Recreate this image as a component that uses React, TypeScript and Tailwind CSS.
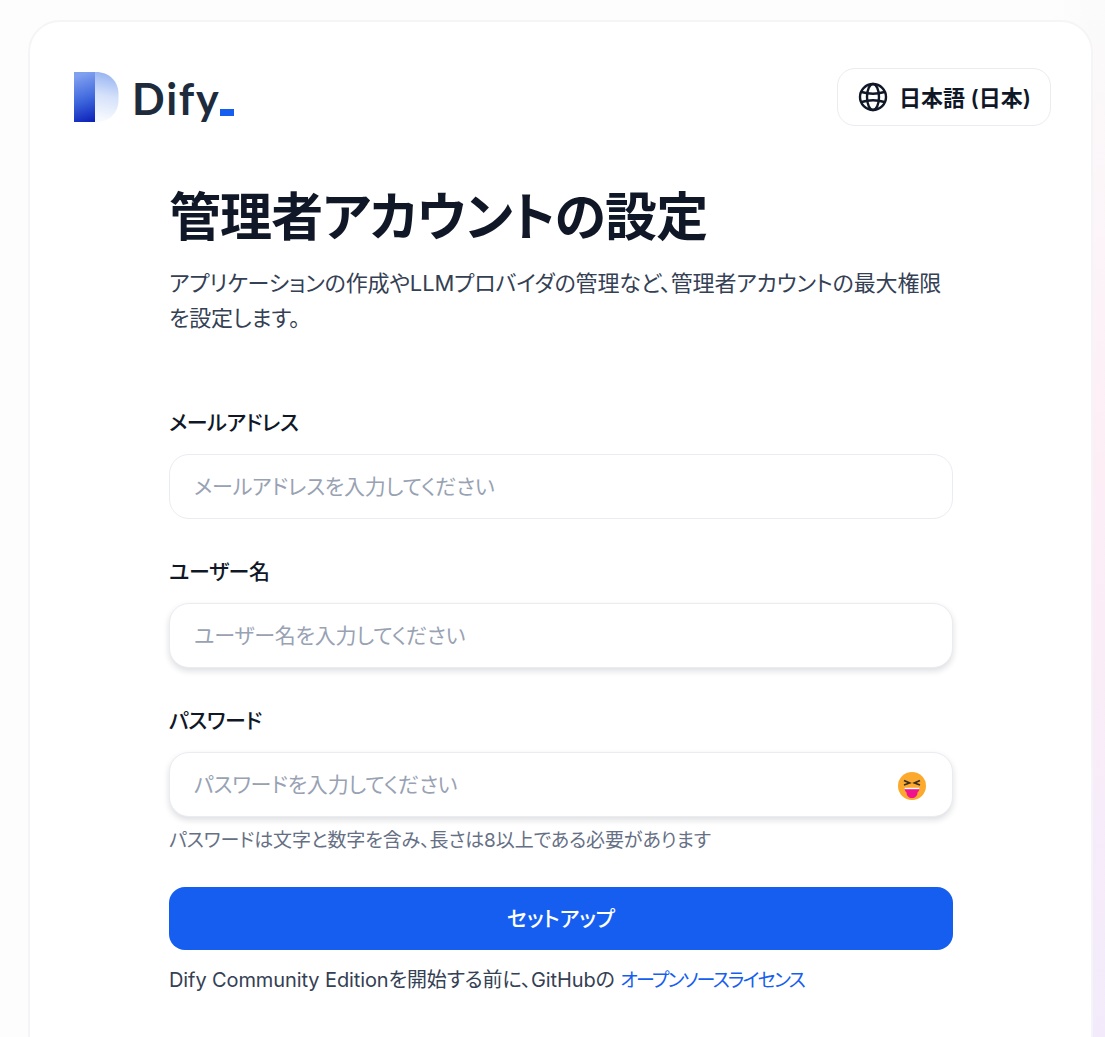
const jp = "font-['Inter','Noto_Sans_CJK_JP','Noto_Sans',sans-serif] [font-feature-settings:'palt']";

function Logo() {
  return (
    <div className="flex items-end">
      <svg width="46" height="50" viewBox="0 0 46 50" className="mr-[13px] block">
        <defs>
          <linearGradient id="dl" x1="20" y1="50" x2="4" y2="4" gradientUnits="userSpaceOnUse">
            <stop offset="0" stopColor="#0a1fb8" />
            <stop offset="0.5" stopColor="#3f68dd" />
            <stop offset="1" stopColor="#7f9fef" />
          </linearGradient>
          <linearGradient id="dr" x1="24" y1="46" x2="34" y2="0" gradientUnits="userSpaceOnUse">
            <stop offset="0" stopColor="#f6f9fe" />
            <stop offset="0.5" stopColor="#d5e1fa" />
            <stop offset="1" stopColor="#94b2f1" />
          </linearGradient>
        </defs>
        <path d="M21 0H22C35 0 44.500 9 44.500 22V28C44.500 41 35 50 22 50H21Z" fill="url(#dr)" />
        <rect x="0" y="0" width="21" height="50" fill="url(#dl)" />
      </svg>
      <div className="relative h-[50px] w-[102px]">
        <span className="absolute left-[-1px] top-[2px] font-['Lato',sans-serif] text-[43px] font-bold leading-[50px] tracking-[1.800px] text-[#1d2b3d]">Dify</span>
        <span className="absolute bottom-[6px] left-[87px] h-[7px] w-[14px] bg-[#155eef]" />
      </div>
    </div>
  );
}

function Globe() {
  return (
    <svg width="30" height="30" viewBox="0 0 30 30" fill="none" stroke="#101828" strokeWidth="2.400">
      <circle cx="15" cy="15" r="13" />
      <ellipse cx="15" cy="15" rx="6" ry="13" />
      <path d="M3.500 10Q15 13.500 26.500 10M3.500 20Q15 16.500 26.500 20" />
    </svg>
  );
}

function Emoji() {
  return (
    <svg width="30" height="30" viewBox="0 0 30 30" className="mt-[2px] block">
      <circle cx="15" cy="15" r="14" fill="#fcaa2e" />
      <path d="M7 9.500L12.500 12L7 14M23 9.500L17.500 12L23 14" fill="none" stroke="#3a2f2a" strokeWidth="1.800" />
      <path d="M7.500 17H22.500C22.500 19 21.500 20.500 20.500 21.500C20.500 25 18 27 15 27C12 27 9.500 25 9.500 21.500C8.500 20.500 7.500 19 7.500 17Z" fill="#f0148c" />
      <path d="M7.500 17.500H22.500" stroke="#ffffff" strokeWidth="1.400" />
    </svg>
  );
}

function Field({ label, placeholder, shadow, children, gap }: { label: string; placeholder: string; shadow?: boolean; children?: React.ReactNode; gap?: string }) {
  return (
    <div className={gap}>
      <div className="h-[26px] text-[21px] font-medium leading-[26px] tracking-[-0.400px] text-[#101828]">{label}</div>
      <div className={`mt-[18px] flex h-[65px] items-center justify-between rounded-[20px] border border-[#eaecf0] bg-white pl-[24px] pr-[25px] ${shadow ? "shadow-[0_3px_6px_rgba(16,24,40,0.14)]" : ""}`}>
        <span className="text-[21px] leading-[30px] tracking-[-0.200px] text-[#98a2b3]">{placeholder}</span>
        {children}
      </div>
    </div>
  );
}

export default function App() {
  return (
    <div className={`${jp} h-[1037px] overflow-hidden bg-[linear-gradient(to_right,#fdfdfd_95%,transparent_99%),linear-gradient(to_bottom,#fbfbfb,#fdeef6_45%,#f3ebfb)] pl-[28px] pr-[12px] pt-[20px]`}>
      <div className="h-[1100px] rounded-[32px] border-2 border-[#f5f5f7] bg-white">
        <div className="flex items-start justify-between pl-[44px] pr-[40px] pt-[46px]">
          <div className="mt-[4px]"><Logo /></div>
          <div className="flex h-[58px] w-[214px] items-center gap-[11px] rounded-[18px] border border-[#eaecf0] bg-white pl-[20px]">
            <Globe />
            <span className="relative top-[1px] text-[22px] font-semibold leading-none text-[#101828]">日本語 (日本)</span>
          </div>
        </div>
        <div className="ml-[139px] mt-[57px] w-[784px]">
          <h1 className="text-[52px] font-semibold leading-[70px] tracking-[-0.900px] text-[#101828]">管理者アカウントの設定</h1>
          <p className="mt-[13px] w-[784px] text-[22px] leading-[35px] tracking-[-0.150px] text-[#344054]">アプリケーションの作成やLLMプロバイダの管理など、管理者アカウントの最大権限を設定します。</p>
          <div className="mt-[74px]">
            <Field label="メールアドレス" placeholder="メールアドレスを入力してください" />
            <Field gap="mt-[40px]" label="ユーザー名" placeholder="ユーザー名を入力してください" shadow />
            <Field gap="mt-[40px]" label="パスワード" placeholder="パスワードを入力してください" shadow><Emoji /></Field>
            <div className="mt-[10px] h-[28px] text-[19px] leading-[28px] tracking-[-0.100px] text-[#667085]">パスワードは文字と数字を含み、長さは8以上である必要があります</div>
            <div className="mt-[32px] flex h-[63px] items-center justify-center rounded-[16px] bg-[#155eef] text-[21px] font-medium text-white">セットアップ</div>
            <div className="mt-[15px] text-[20px] leading-[30px] tracking-[-0.100px] text-[#344054]">Dify Community Editionを開始する前に、GitHubの <span className="text-[19px] tracking-[-1.750px] text-[#155eef]">オープンソースライセンス</span></div>
          </div>
        </div>
      </div>
    </div>
  );
}
